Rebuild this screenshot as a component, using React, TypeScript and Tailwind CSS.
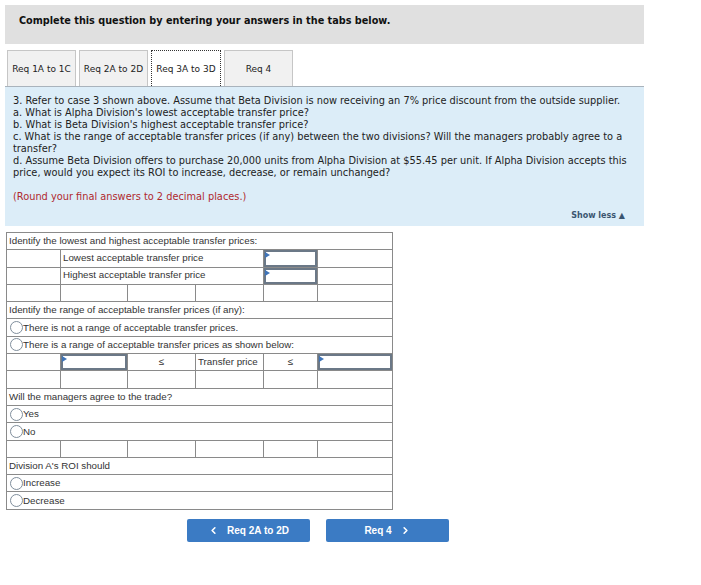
import { ChevronLeft, ChevronRight } from 'lucide-react';

const COLS = ['w-[54px]', 'w-[67px]', 'w-[68px]', 'w-[68px]', 'w-[54px]', 'w-[75px]'];

function Radio({ label }: { label: string }) {
    return (
        <span className="flex items-center">
            <span className="inline-block w-[13px] h-[13px] rounded-full border border-[#7f8e9c] bg-white ml-[1px]" />
            <span>{label}</span>
        </span>
    );
}

function InputCell() {
    return (
        <td className="border border-[#8a8a8a] p-0 relative">
            <div className="absolute inset-0 border-2 border-[#6b7887]" />
            <div className="absolute left-[1px] top-[2px] w-0 h-0 border-y-[3px] border-y-transparent border-l-[5px] border-l-[#3f74b8]" />
        </td>
    );
}

function EmptyRow() {
    return (
        <tr className="h-[17.3px]">
            {COLS.map((c, i) => (
                <td key={i} className="border border-[#8a8a8a] p-0" />
            ))}
        </tr>
    );
}

function FullRow({ children }: { children: React.ReactNode }) {
    return (
        <tr className="h-[17.3px]">
            <td colSpan={6} className="border border-[#8a8a8a] p-0 pl-[2px] leading-none">
                {children}
            </td>
        </tr>
    );
}

export default function App() {
    const verdana = { fontFamily: '"DejaVu Sans", Verdana, sans-serif' };
    return (
        <div className="w-[701px] h-[585px] bg-white text-[#222]">
            <div className="pt-[5px] pl-[5px] w-[644px]">
                <div className="h-[39px] bg-[#e0e0e0] pt-[10px] pl-[14px] text-[9.7px] leading-[12px] font-bold text-[#111]" style={verdana}>
                    Complete this question by entering your answers in the tabs below.
                </div>

                <div className="flex gap-[3px] mt-[6px] pl-[2px] h-[36px] text-[9px] text-[#222]" style={verdana}>
                    {['Req 1A to 1C', 'Req 2A to 2D', 'Req 3A to 3D', 'Req 4'].map((t) => (
                        <div
                            key={t}
                            className={
                                t === 'Req 3A to 3D'
                                    ? 'w-[70px] flex items-center justify-center pt-[2px] bg-white border border-dotted border-[#333] border-b-0'
                                    : 'w-[69px] flex items-center justify-center pt-[2px] bg-[#f1f1f1] border border-[#c6c6c6] border-b-0'
                            }
                        >
                            {t}
                        </div>
                    ))}
                </div>

                <div className="h-[140px] bg-[#dcedf8] border-t border-[#a9b3bc] pl-[8px] pr-[8px] pt-[8px] text-[9.8px] leading-[12px] text-[#222] relative" style={verdana}>
                    <p>3. Refer to case 3 shown above. Assume that Beta Division is now receiving an 7% price discount from the outside supplier.</p>
                    <p>a. What is Alpha Division's lowest acceptable transfer price?</p>
                    <p>b. What is Beta Division's highest acceptable transfer price?</p>
                    <p>c. What is the range of acceptable transfer prices (if any) between the two divisions? Will the managers probably agree to a transfer?</p>
                    <p>d. Assume Beta Division offers to purchase 20,000 units from Alpha Division at $55.45 per unit. If Alpha Division accepts this price, would you expect its ROI to increase, decrease, or remain unchanged?</p>
                    <p className="mt-[12px] text-[#b0292e]">(Round your final answers to 2 decimal places.)</p>
                    <div className="flex justify-end pr-[11px] mt-[7px] text-[8px] font-bold text-[#3a5570]">Show less ▲</div>
                </div>

                <table
                    className="mt-[6px] ml-[1px] border-collapse table-fixed text-[9.75px] text-[#333]"
                    style={{ fontFamily: '"Liberation Sans", Arial, sans-serif' }}
                >
                    <colgroup>
                        {COLS.map((c, i) => (
                            <col key={i} className={c} />
                        ))}
                    </colgroup>
                    <tbody>
                        <FullRow>Identify the lowest and highest acceptable transfer prices:</FullRow>
                        <tr className="h-[17.3px]">
                            <td className="border border-[#8a8a8a] p-0" />
                            <td colSpan={3} className="border border-[#8a8a8a] p-0 pl-[2px]">Lowest acceptable transfer price</td>
                            <InputCell />
                            <td className="border border-[#8a8a8a] p-0" />
                        </tr>
                        <tr className="h-[17.3px]">
                            <td className="border border-[#8a8a8a] p-0" />
                            <td colSpan={3} className="border border-[#8a8a8a] p-0 pl-[2px]">Highest acceptable transfer price</td>
                            <InputCell />
                            <td className="border border-[#8a8a8a] p-0" />
                        </tr>
                        <EmptyRow />
                        <FullRow>Identify the range of acceptable transfer prices (if any):</FullRow>
                        <FullRow><Radio label="There is not a range of acceptable transfer prices." /></FullRow>
                        <FullRow><Radio label="There is a range of acceptable transfer prices as shown below:" /></FullRow>
                        <tr className="h-[17.3px]">
                            <td className="border border-[#8a8a8a] p-0" />
                            <InputCell />
                            <td className="border border-[#8a8a8a] p-0 text-center">≤</td>
                            <td className="border border-[#8a8a8a] p-0 pl-[2px]">Transfer price</td>
                            <td className="border border-[#8a8a8a] p-0 text-center">≤</td>
                            <InputCell />
                        </tr>
                        <EmptyRow />
                        <FullRow>Will the managers agree to the trade?</FullRow>
                        <FullRow><Radio label="Yes" /></FullRow>
                        <FullRow><Radio label="No" /></FullRow>
                        <EmptyRow />
                        <FullRow>Division A's ROI should</FullRow>
                        <FullRow><Radio label="Increase" /></FullRow>
                        <FullRow><Radio label="Decrease" /></FullRow>
                    </tbody>
                </table>

                <div className="flex gap-[16px] ml-[182px] mt-[9px] text-[10px] font-bold text-white" style={{ fontFamily: '"Liberation Sans", Arial, sans-serif' }}>
                    <div className="w-[123px] h-[23px] bg-[#3b7bc4] rounded-[2px] flex items-center justify-center gap-[8px]">
                        <ChevronLeft size={11} strokeWidth={3.5} />
                        <span>Req 2A to 2D</span>
                    </div>
                    <div className="w-[123px] h-[23px] bg-[#3b7bc4] rounded-[2px] flex items-center justify-center gap-[8px]">
                        <span>Req 4</span>
                        <ChevronRight size={11} strokeWidth={3.5} />
                    </div>
                </div>
            </div>
        </div>
    );
}
